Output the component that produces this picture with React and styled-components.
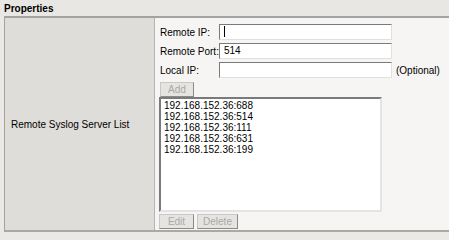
import React from 'react'
import styled, { createGlobalStyle } from 'styled-components'

const GlobalStyle = createGlobalStyle`
  body {
    margin: 0;
    background: #ebe9e5;
    font-family: "Liberation Sans", Arial, sans-serif;
    font-size: 10px;
    color: #000;
  }
`

const Page = styled.div`
  width: 449px;
  height: 240px;
  overflow: hidden;
`

const Title = styled.div`
  height: 16px;
  padding-left: 4px;
  font-weight: bold;
  font-size: 10px;
  line-height: 17px;
  background: #e9e7e3;
`

const Table = styled.div`
  display: grid;
  grid-template-columns: 150px 1fr;
  margin-left: 4px;
  height: 212px;
  border-top: 2px solid #a3a3a3;
  border-bottom: 2px solid #a9a9a9;
  border-left: 1px solid #a3a3a3;
`

const LabelCell = styled.div`
  display: flex;
  align-items: center;
  padding-left: 6px;
  background: #dfddd9;
  border-right: 1px solid #b4b4b4;
  font-size: 10px;
`

const ValueCell = styled.div`
  display: flex;
  flex-direction: column;
  padding: 6px 0 0 5px;
  background: #f6f5f3;
`

const Row = styled.div`
  display: flex;
  align-items: center;
  height: 16px;
  margin-bottom: ${p => (p.$last ? 0 : 3)}px;
`

const Label = styled.span`
  width: 59px;
  flex: none;
`

const Input = styled.div`
  box-sizing: border-box;
  width: 173px;
  height: 16px;
  padding-left: 4px;
  line-height: 14px;
  background: #fff;
  border: 1px solid;
  border-color: #7a7a7a #e0e0e0 #e0e0e0 #7a7a7a;
`

const Caret = styled.span`
  display: inline-block;
  width: 1px;
  height: 11px;
  margin-top: 1px;
  background: #000;
  vertical-align: top;
`

const Note = styled.span`
  margin-left: 4px;
`

const Button = styled.div`
  box-sizing: border-box;
  width: ${p => p.$w}px;
  height: 15px;
  margin-right: 3px;
  border: 1px solid;
  border-color: #c8c8c8 #8a8a8a #8a8a8a #c8c8c8;
  background: #e6e4e0;
  color: #a8a8a8;
  text-align: center;
  line-height: 13px;
`

const List = styled.div`
  box-sizing: border-box;
  width: 223px;
  height: 115px;
  margin: 0 0 2px -1px;
  padding: 1px 3px;
  background: #fff;
  border: 2px solid;
  border-color: #7a7a7a #e4e4e4 #e4e4e4 #7a7a7a;
  line-height: 11px;
`

const ButtonBar = styled.div`
  display: flex;
  margin-left: -1px;
`

const servers = [
  '192.168.152.36:688',
  '192.168.152.36:514',
  '192.168.152.36:111',
  '192.168.152.36:631',
  '192.168.152.36:199',
]

export default function App() {
  return (
    <Page>
      <GlobalStyle />
      <Title>Properties</Title>
      <Table>
        <LabelCell>Remote Syslog Server List</LabelCell>
        <ValueCell>
          <Row>
            <Label>Remote IP:</Label>
            <Input><Caret /></Input>
          </Row>
          <Row>
            <Label>Remote Port:</Label>
            <Input>514</Input>
          </Row>
          <Row>
            <Label>Local IP:</Label>
            <Input />
            <Note>(Optional)</Note>
          </Row>
          <Row $last>
            <Button $w={34}>Add</Button>
          </Row>
          <List>
            {servers.map(s => <div key={s}>{s}</div>)}
          </List>
          <ButtonBar>
            <Button $w={35}>Edit</Button>
            <Button $w={41}>Delete</Button>
          </ButtonBar>
        </ValueCell>
      </Table>
    </Page>
  )
}
